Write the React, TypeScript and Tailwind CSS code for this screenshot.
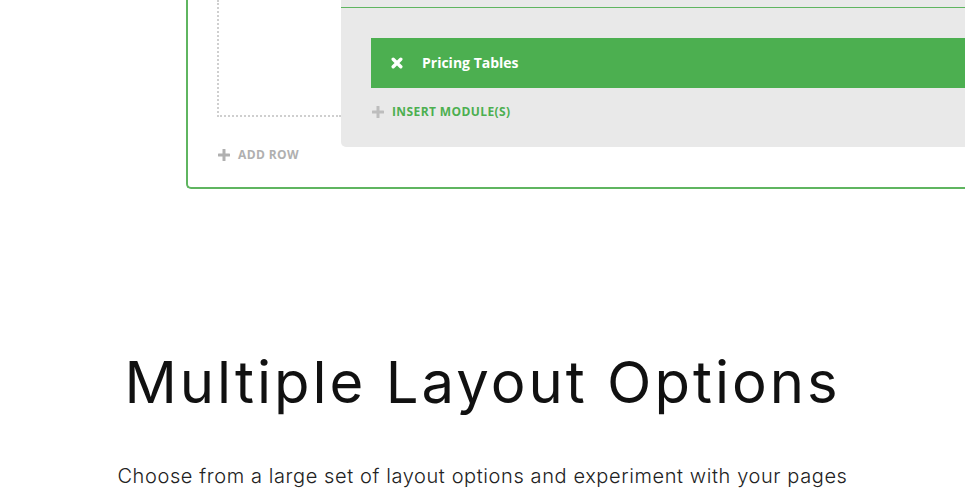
import React from "react";

const Plus = ({ className }: { className: string }) => (
  <svg viewBox="0 0 12 12" className={className} fill="currentColor">
    <rect x="4.5" y="0" width="3" height="12" rx="0.6" />
    <rect x="0" y="4.5" width="12" height="3" rx="0.6" />
  </svg>
);

const Times = () => (
  <svg viewBox="0 0 12 12" className="w-[12px] h-[12px]" fill="none" stroke="currentColor">
    <path d="M2.2 2.2 L9.8 9.8 M9.8 2.2 L2.2 9.8" strokeWidth="3.4" strokeLinecap="round" />
  </svg>
);

const Builder = () => {
  return (
    <div className="pl-[186px]">
      <div className="h-[189px] border-l-2 border-b-2 border-[#5fb560] rounded-bl-[5px] flex">
        <div className="w-[153px] shrink-0 flex flex-col">
          <div className="ml-[29px] h-[117px] border-l-2 border-b-2 border-dotted border-[#cfcfcf]"></div>
          <div className="ml-[30px] mt-[29px] flex items-center gap-2 text-[#b0b0b0]">
            <Plus className="w-[12px] h-[12px]" />
            <span className="text-[12px] font-bold uppercase tracking-[0.4px]">Add Row</span>
          </div>
        </div>
        <div className="flex-1 h-[147px] bg-[#e9e9e9] rounded-bl-[5px]">
          <div className="h-[7px]"></div>
          <div className="h-px bg-[#5fb560]"></div>
          <div className="ml-[30px] mt-[30px] h-[50px] bg-[#4caf50] flex items-center text-white">
            <div className="w-[51px] flex justify-center">
              <Times />
            </div>
            <span className="text-[14px] font-bold -mt-[2px]">Pricing Tables</span>
          </div>
          <div className="ml-[31px] mt-[16px] flex items-center gap-2 leading-4">
            <Plus className="w-[12px] h-[12px] text-[#bdbdbd]" />
            <span className="text-[12px] font-bold uppercase text-[#4caf50] tracking-[0.4px]">Insert Module(s)</span>
          </div>
        </div>
      </div>
    </div>
  );
};

export default function App() {
  return (
    <div className="w-[965px] h-[500px] overflow-hidden bg-white" style={{ fontFamily: '"Open Sans", sans-serif' }}>
      <Builder />
      <div className="flex flex-col items-center mt-[157px]" style={{ fontFamily: 'Inter, sans-serif' }}>
        <h1 className="text-[58px] leading-[72px] font-normal text-[#111] tracking-[3px]">Multiple Layout Options</h1>
        <p className="mt-[44px] text-[20px] leading-[28px] font-light text-[#222] tracking-[0.6px]">
          Choose from a large set of layout options and experiment with your pages
        </p>
      </div>
    </div>
  );
}
